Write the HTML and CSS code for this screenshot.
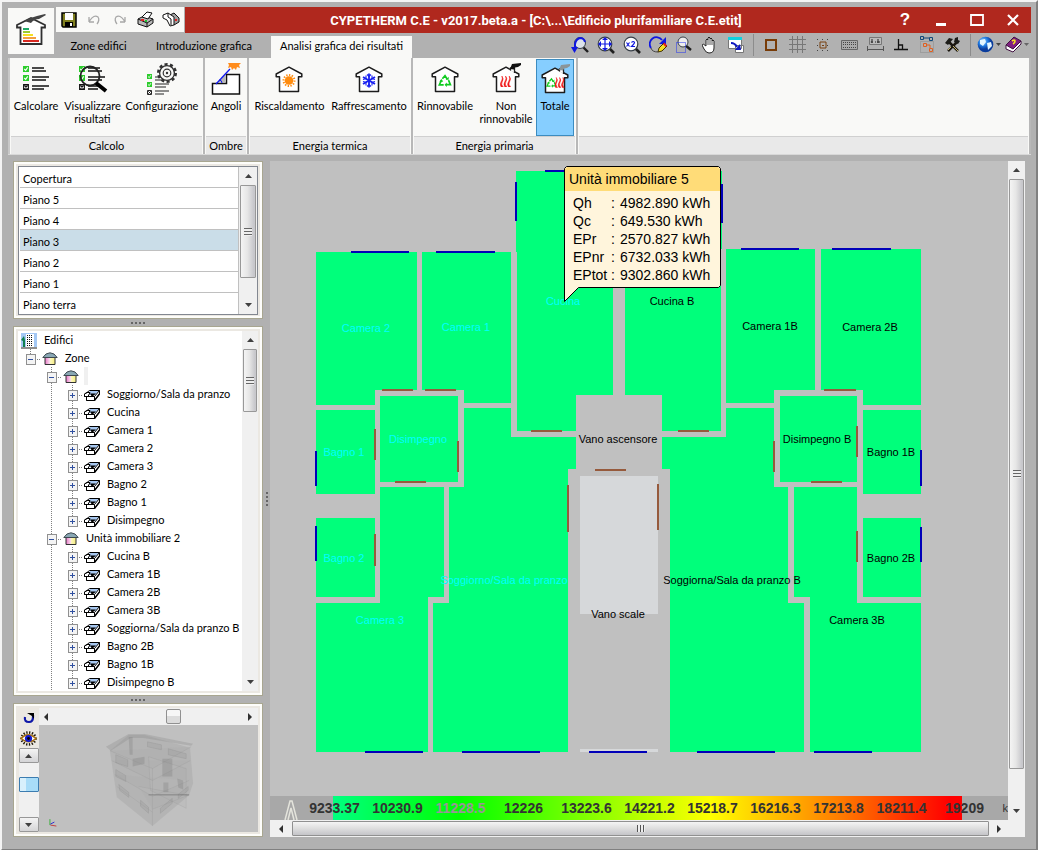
FILE: index.html
```html
<!DOCTYPE html>
<html lang="it">
<head>
<meta charset="utf-8">
<meta name="viewport" content="width=device-width, initial-scale=1">
<title>CYPETHERM C.E</title>
<link rel="stylesheet" href="styles.css">
</head>
<body>
<svg class="sprite" aria-hidden="true">
  <defs>
    <linearGradient id="g-home" x1="0" x2="1"><stop offset="0" stop-color="#e878c8"/><stop offset=".5" stop-color="#fce4f0"/><stop offset=".5" stop-color="#fdf8c0"/><stop offset="1" stop-color="#f4ec80"/></linearGradient>
    <radialGradient id="g-globe" cx=".35" cy=".3"><stop offset="0" stop-color="#9cd8ff"/><stop offset=".6" stop-color="#1e78e0"/><stop offset="1" stop-color="#0a3c9c"/></radialGradient>
    <symbol id="i-room" viewBox="0 0 16 14"><path d="M5.500 2.500H15.500V6L10.500 12.500H2.500V8.500H.500V6L3 4.500z" fill="#fff" stroke="#000"/><path d="M5.500 3H15L11.500 7H5z" fill="#a8c8f0"/><path d="M.500 8.500V6L3 4.500H6L4 8.500zM4 8.500h6.500M2.500 12.500h8v-4l5-6" fill="none" stroke="#000"/><path d="M6 5.500h6L8 9z"/><path d="M10.500 12.500L15.500 6" stroke="#000" stroke-width="1.400"/></symbol>
    <symbol id="i-home" viewBox="0 0 16 14"><path d="M3 5h10v7.500H3z" fill="url(#g-home)" stroke="#303030"/><path d="M.800 5.500L4 2 8 .800 12 2l3.200 3.500z" fill="#8aa8b4" stroke="#3c4850"/></symbol>
    <symbol id="i-house" viewBox="0 0 28 28"><path d="M4.500 26.500V11.800H1.200V9L14 2.200 26.800 9v2.800h-3.300v14.700z" fill="#fff" stroke="#1c1c1c" stroke-width="1.500" stroke-linejoin="round"/></symbol>
    <symbol id="i-recycle" viewBox="0 0 16 14"><g fill="none" stroke="#10cc20" stroke-width="1.900"><path d="M5 4.500L8 1l2.600 4M12 6l2.200 5.200H9M6.500 11.500H1.500L4 6"/></g><path d="M8.800 5.500h3.400V2zM10 8.800v5L7.500 11.300zM1.500 7.500l2.600-2.700 1.800 3z" fill="#10cc20"/></symbol>
    <symbol id="i-flames" viewBox="0 0 12 12"><path d="M1.500 0q2.500 3 .500 6t1 6H.800q-2-3 0-6t.700-6zM5.500 0q2.500 3 .500 6t1 6H4.800q-2-3 0-6t.700-6zM9.500 0q2.500 3 .500 6t1 6H8.800q-2-3 0-6t.700-6z" fill="#f01818" stroke="#f01818" stroke-width=".6"/></symbol>
    <symbol id="i-lens" viewBox="0 0 18 18"><path d="M12 12l5 5" stroke="#202020" stroke-width="2.600"/><circle cx="8" cy="8" r="6.800" fill="#fff" stroke="#384048" stroke-width="1.200"/></symbol>
    <symbol id="i-check" viewBox="0 0 6 6"><path d="M0 0h6v6H0z" fill="#2ccc2c"/><path d="M1.300 3l1.400 1.400 2-3" fill="none" stroke="#fff" stroke-width="1.100"/></symbol>
    <symbol id="i-x" viewBox="0 0 6 6"><path d="M.600.600h4.800v4.800H.600zM1.500 1.500l3 3m0-3l-3 3" fill="#fff" stroke="#111" stroke-width="1.100"/></symbol>
    <symbol id="i-up" viewBox="0 0 7 4"><path d="M0 4L3.500 0 7 4z" fill="#404040"/></symbol>
    <symbol id="i-down" viewBox="0 0 7 4"><path d="M0 0h7L3.500 4z" fill="#404040"/></symbol>
    <symbol id="i-left" viewBox="0 0 4 8"><path d="M4 0v8L0 4z" fill="#303030"/></symbol>
    <symbol id="i-right" viewBox="0 0 4 8"><path d="M0 0v8l4-4z" fill="#303030"/></symbol>
  </defs>
</svg>
<div class="window">
  <header class="header">
    <div class="logo">
      <svg width="36" height="36" viewBox="0 0 36 36" aria-hidden="true"><path d="M7.500 31V14.500H4V12L18 5l14 7v2.500h-3.500V31z" fill="#fff" stroke="#303030" stroke-width="1.800"/><path d="M11 8Q16 5 24 3l8-2 1 1-7 4q-5 0-8 4z" fill="#444"/><path d="M10 15h6v2h-6z" fill="#20a868"/><path d="M10 18h7v2h-7z" fill="#9ccc30"/><path d="M10 21h10v2H10z" fill="#f4e020"/><path d="M10 24h13v2H10z" fill="#f4a040"/><path d="M10 27h16v2H10z" fill="#d82820"/></svg>
    </div>
    <div class="header-rows">
      <div class="title-row">
        <div class="quick">
          <button class="tool" aria-label="Salva"><svg width="16" height="16" viewBox="0 0 16 16"><path d="M1 1h14v14H2L1 14z" fill="#808020" stroke="#000" stroke-width="1.500"/><path d="M4 1h8v7H4z" fill="#fff"/><path d="M4 10h8v5H4z"/><path d="M9 11h2v3H9z" fill="#fff"/></svg></button>
          <button class="tool" aria-label="Annulla"><svg width="16" height="16" viewBox="0 0 16 16"><path d="M3 10V5m0 5h5M3.500 9Q8 2 12 5q2 3-1 7" fill="none" stroke="#a8a8a8" stroke-width="1.300"/></svg></button>
          <button class="tool" aria-label="Ripeti"><svg width="16" height="16" viewBox="0 0 16 16"><path d="M13 10V5m0 5H8M12.500 9Q8 2 4 5q-2 3 1 7" fill="none" stroke="#a8a8a8" stroke-width="1.300"/></svg></button>
          <button class="tool" aria-label="Stampa"><svg width="18" height="17" viewBox="0 0 18 17"><path d="M1 8l6-3 9 3v4l-6 4-9-3z" fill="#b8b8b8" stroke="#111"/><path d="M5 6l5-5 5 1-4 6z" fill="#fff" stroke="#111"/><path d="M1 8l9 4 6-4M10 12v4" fill="none" stroke="#111"/><path d="M4 8h3v2H4z" fill="#e02020"/><path d="M8 9h2v2H8z" fill="#20c030"/></svg></button>
          <button class="tool" aria-label="Anteprima"><svg width="18" height="17" viewBox="0 0 18 17"><path d="M8 4l4-2 5 5v4l-5 3z" fill="#a0a0a0" stroke="#111"/><path d="M1 4l5-2 6 4v8l-4 1-3-6-4-2z" fill="#fff" stroke="#111"/><path d="M6 2v4l3 2v6" fill="none" stroke="#111"/><path d="M13 8h2v2h-2z" fill="#e02020"/></svg></button>
        </div>
        <div class="titlebar">
          <h1 class="title">CYPETHERM C.E - v2017.beta.a - [C:\...\Edificio plurifamiliare C.E.etit]</h1>
          <button class="win-btn help" aria-label="Aiuto">?</button>
          <button class="win-btn" aria-label="Riduci"><svg width="14" height="14"><path d="M2 10h10v3H2z" fill="#fff"/></svg></button>
          <button class="win-btn" aria-label="Ingrandisci"><svg width="14" height="14"><path d="M1 2h12v10H1z" fill="none" stroke="#fff" stroke-width="1.800"/></svg></button>
          <button class="win-btn" aria-label="Chiudi"><svg width="14" height="14"><path d="M2 2l10 10M12 2L2 12" stroke="#fff" stroke-width="2.200"/></svg></button>
        </div>
      </div>
      <div class="tab-row">
        <nav class="tabs">
          <button class="tab tab-zone">Zone edifici</button>
          <button class="tab tab-intro">Introduzione grafica</button>
          <button class="tab tab-active">Analisi grafica dei risultati</button>
        </nav>
        <div class="toolbar">
          <button class="tool" aria-label="Zoom precedente"><svg width="18" height="18" viewBox="0 0 18 18"><path d="M12 11l5 5" stroke="#202020" stroke-width="2.400"/><circle cx="9" cy="7" r="5.500" fill="#dde4ec" stroke="#384048"/><path d="M4 12V8q1-5 5-6 4 0 5 4" fill="none" stroke="#1018e0" stroke-width="2"/><path d="M0 11h7l-3.500 6z" fill="#1018e0"/></svg></button>
          <button class="tool" aria-label="Zoom tutto"><svg width="18" height="18" viewBox="0 0 18 18"><use href="#i-lens" width="18" height="18"/><path d="M8 2v12M2 8h12" stroke="#1018e0" stroke-width="1.200"/><path d="M8 1l3 3H5zM8 15l3-3H5zM1 8l3-3v6zM15 8l-3-3v6z" fill="#1018e0"/></svg></button>
          <button class="tool" aria-label="Zoom x2"><svg width="18" height="18" viewBox="0 0 18 18"><use href="#i-lens" width="18" height="18"/><path d="M3.500 6.500l3 4m0-4l-3 4M8.500 6.500q2-2 3 0 0 1-3 4h3.500" fill="none" stroke="#1018e0" stroke-width="1.200"/></svg></button>
          <button class="tool" aria-label="Ridisegna"><svg width="18" height="18" viewBox="0 0 18 18"><path d="M2 12A6.500 6.500 0 0 1 13 4" fill="none" stroke="#1018e0" stroke-width="1.800"/><path d="M17 1v7h-7z" fill="#1018e0"/><path d="M2 12q1 4 7 4" fill="none" stroke="#444"/><path d="M9 16l1-4 5-5 3 3-5 5z" fill="#f4e020" stroke="#403000"/><path d="M14 8l1.500-1.500 2.500 3L16.500 11z" fill="#e02020"/></svg></button>
          <button class="tool" aria-label="Zoom finestra"><svg width="18" height="18" viewBox="0 0 18 18"><path d="M10 9l6 5" stroke="#202020" stroke-width="2.400"/><circle cx="8" cy="6" r="5" fill="#eee" stroke="#384048"/><path d="M1.500 6.500h9v10h-9z" fill="none" stroke="#2030f0" stroke-dasharray="1 1"/></svg></button>
          <button class="tool" aria-label="Sposta"><svg width="16" height="18" viewBox="0 0 16 18"><path d="M4 10V4q1-2 2 0V2q1-2 2 0v1q1-2 2 0v2q1-2 2 0v7q0 5-5 5-3 0-5-4l-2-4q1-2 4 1z" fill="#fff" stroke="#222"/><path d="M6 4v5m2-6v6m2-4v4" stroke="#555"/></svg></button>
          <button class="tool" aria-label="Finestre"><svg width="18" height="18" viewBox="0 0 18 18"><path d="M1.500 1.500h13v11h-13zM8.500 9.500h8v7h-8z" fill="#fff" stroke="#777"/><path d="M1 1h14v3H1z" fill="#10d0e0"/><path d="M4 7q4 0 6 4" fill="none" stroke="#1018c0" stroke-width="2"/><path d="M14 14H8l5-6z" fill="#1018c0"/></svg></button>
          <span class="tool-sep"></span>
          <button class="tool" aria-label="Riquadro"><svg width="14" height="14"><path d="M2 2h10v10H2z" fill="none" stroke="#783c08" stroke-width="2"/></svg></button>
          <button class="tool" aria-label="Griglia"><svg width="17" height="17"><path d="M3.500 0v17M8.500 0v17M13.500 0v17M0 3.500h17M0 8.500h17M0 13.500h17" stroke="#777"/></svg></button>
          <button class="tool" aria-label="Aggancio"><svg width="16" height="16"><path d="M5 5h6v6H5z" fill="none" stroke="#784010"/><path d="M7 8h2v1H7z" fill="#784010"/><path d="M2 2.500h14M2 13.500h14M2 8.500h1M12 8.500h3" stroke="#444" stroke-dasharray="1 4"/></svg></button>
          <button class="tool" aria-label="Tastiera"><svg width="17" height="12"><path d="M.500 1.500h16v9H.500z" fill="#aaa" stroke="#666"/><path d="M2 3.500h13M2 5.500h13M2 8.500h13" stroke="#444" stroke-dasharray="1 1"/></svg></button>
          <button class="tool" aria-label="Quote"><svg width="17" height="15"><path d="M2.500.500h12v7h-12z" fill="#bbb" stroke="#777"/><path d="M5 2v4M3.800 5h2M8 5h1M11 2v4M10 5h3" stroke="#222"/><path d="M.500 9v5M16.500 9v5M1 12.500h15" stroke="#555"/></svg></button>
          <button class="tool" aria-label="Ortogonale"><svg width="16" height="14"><path d="M5.500 1v11M1 11.500h14M5.500 7h4v4" fill="none" stroke="#111" stroke-width="1.300"/></svg></button>
          <button class="tool" aria-label="Selezione"><svg width="16" height="17"><path d="M1.500 5.500h13v11h-13z" fill="none" stroke="#888" stroke-dasharray="1 1"/><path d="M1.500.500h3v3h-3zM10.500 1.500h3v3h-3zM5 2h5" fill="none" stroke="#104878"/><path d="M4.500 7.500h3v3h-3zM10.500 12.500h3v3h-3zM8 9h3v3" fill="none" stroke="#e06020"/></svg></button>
          <button class="tool" aria-label="Strumenti"><svg width="16" height="16"><path d="M3 4l10 10M12 5L3 14" stroke="#1c1810" stroke-width="2.500"/><path d="M0 6l4-5 4 1-5 6zM10 1l3-1v3l2 1-2 3-4-2z" fill="#1c1c18"/><path d="M8 9l5 5M6 10l-3 3" stroke="#c8b870"/></svg></button>
          <span class="tool-sep"></span>
          <button class="tool tool-drop" aria-label="Web"><svg width="17" height="17"><circle cx="8.500" cy="8.500" r="7.800" fill="url(#g-globe)"/><path d="M3 4l5-1 1 3-3 4-3-2zM10 7l4-1 1 4-4 4z" fill="#e4f6ff"/></svg><svg width="5" height="3"><path d="M0 0h5L2.500 3z" fill="#444"/></svg></button>
          <button class="tool tool-drop" aria-label="Guida"><svg width="17" height="17"><path d="M1 9L9 1l7 4-8 9z" fill="#802080" stroke="#401040"/><path d="M1 9v4l7 3 8-8V5l-8 8z" fill="#fff" stroke="#401040"/><path d="M7 5q3-2 3 0t-2 3" fill="none" stroke="#f8e820" stroke-width="1.600"/></svg><svg width="5" height="3"><path d="M0 0h5L2.500 3z" fill="#666"/></svg></button>
        </div>
      </div>
    </div>
  </header>

  <section class="ribbon">
    <div class="group">
      <div class="group-buttons cols-calc">
        <button class="big"><svg width="28" height="28" viewBox="0 0 28 28"><use href="#i-check" x="1" y="1" width="6" height="6"/><use href="#i-check" x="1" y="10" width="6" height="6"/><use href="#i-x" x="1" y="19" width="6" height="6"/><path d="M10 3h12M10 6h14M10 12h17M10 15h14M10 21h17M10 24h12" stroke="#111" stroke-width="1.300"/></svg><span>Calcolare</span></button>
        <button class="big"><svg width="30" height="28" viewBox="0 0 30 28"><use href="#i-check" x="1" y="1" width="6" height="6"/><use href="#i-check" x="1" y="10" width="6" height="6"/><use href="#i-x" x="1" y="19" width="6" height="6"/><path d="M10 3h12M10 6h14M10 12h17M10 15h14M10 21h10M10 24h10" stroke="#111" stroke-width="1.500"/><circle cx="12" cy="11" r="9.500" fill="none" stroke="#222" stroke-width="1.800"/><path d="M18 18l10 8" stroke="#000" stroke-width="4"/></svg><span>Visualizzare<br>risultati</span></button>
        <button class="big"><svg width="32" height="32" viewBox="0 0 32 32"><use href="#i-check" x="1" y="11" width="5" height="5"/><use href="#i-check" x="1" y="19" width="5" height="5"/><use href="#i-x" x="1" y="27" width="5" height="5"/><path d="M9 14h10M9 17h9M9 21h14M9 24h11M9 28h14M9 31h9" stroke="#222" stroke-width="1.200"/><circle cx="21" cy="10" r="8.500" fill="none" stroke="#333" stroke-width="3" stroke-dasharray="3 2.340"/><circle cx="21" cy="10" r="7.400" fill="#f9f9f7" stroke="#333" stroke-width="1.300"/><circle cx="21" cy="10" r="3.800" fill="none" stroke="#333" stroke-width="1.200"/><circle cx="21" cy="10" r="1.200" fill="#333"/></svg><span>Configurazione</span></button>
      </div>
      <div class="caption">Calcolo</div>
    </div>
    <div class="group">
      <div class="group-buttons cols-one">
        <button class="big"><svg width="30" height="32" viewBox="0 0 30 32"><path d="M1.500 20.500h14v-9h13V31h-27z" fill="#fff" stroke="#111" stroke-width="1.500"/><path d="M6 20l8-8v8z" fill="#b8b8b8"/><path d="M5 21L19 6" stroke="#1018f0" stroke-width="1.300"/><path d="M8 17q3 0 3 3" fill="none" stroke="#1018f0"/><path d="M17 0h13l-2 2 1 3-3-1-1 3-2-2-2 2-1-3-3 1 1-3z" fill="#ff8c1c"/></svg><span>Angoli</span></button>
      </div>
      <div class="caption">Ombre</div>
    </div>
    <div class="group">
      <div class="group-buttons cols-heat">
        <button class="big"><svg width="28" height="28" viewBox="0 0 28 28"><use href="#i-house" width="28" height="28"/><circle cx="14" cy="15.500" r="5.500" fill="none" stroke="#ff8c10" stroke-width="2" stroke-dasharray="1.400 1.400"/><circle cx="14" cy="15.500" r="4.300" fill="#ff8c10"/></svg><span>Riscaldamento</span></button>
        <button class="big"><svg width="28" height="28" viewBox="0 0 28 28"><use href="#i-house" width="28" height="28"/><path d="M14 8.500v14M8 12l12 7M20 12L8 19" stroke="#1820f0" stroke-width="1.800"/><path d="M12 9.500l2 2 2-2M12 21.500l2-2 2 2M8 14.500l3-1v-3M20 14.500l-3-1v-3M8 16.500l3 1v3M20 16.500l-3 1v3" fill="none" stroke="#1820f0" stroke-width="1.100"/></svg><span>Raffrescamento</span></button>
      </div>
      <div class="caption">Energia termica</div>
    </div>
    <div class="group">
      <div class="group-buttons cols-prim">
        <button class="big"><svg width="28" height="28" viewBox="0 0 28 28"><use href="#i-house" width="28" height="28"/><use href="#i-recycle" x="7" y="9" width="14" height="14"/></svg><span>Rinnovabile</span></button>
        <button class="big"><svg width="32" height="32" viewBox="0 0 32 32"><use href="#i-house" x="2" y="2" width="28" height="28"/><path d="M20.500 7.500V5h4v5" fill="#fff" stroke="#222" stroke-width="1.300"/><path d="M20 6l2-5 9-1v2l-3 2-3 .500-1 2z" fill="#111"/><use href="#i-flames" x="10" y="13" width="12" height="11"/></svg><span>Non<br>rinnovabile</span></button>
        <button class="big big-on" aria-pressed="true"><svg width="32" height="32" viewBox="0 0 32 32"><use href="#i-house" x="2" y="2" width="28" height="28"/><path d="M20.500 7.500V5h4v5" fill="#fff" stroke="#222" stroke-width="1.300"/><path d="M20 6l2-5 9-1v2l-3 2-3 .500-1 2z" fill="#8a9498"/><use href="#i-recycle" x="7" y="12" width="11" height="14"/><use href="#i-flames" x="16" y="13" width="10" height="11"/></svg><span>Totale</span></button>
      </div>
      <div class="caption">Energia primaria</div>
    </div>
    <div class="group group-last"><div class="group-buttons"></div><div class="caption"></div></div>
  </section>

  <main class="main">
    <aside class="side">
      <section class="panel panel-floors">
        <div class="floors">
          <ul class="floor-list">
            <li>Copertura</li><li>Piano 5</li><li>Piano 4</li><li class="selected">Piano 3</li><li>Piano 2</li><li>Piano 1</li><li>Piano terra</li>
          </ul>
          <div class="vbar vbar-floors"><button class="arrow" aria-label="Su"><svg width="7" height="4"><use href="#i-up"/></svg></button><div class="thumb"><i class="grip"></i></div><button class="arrow" aria-label="Giù"><svg width="7" height="4"><use href="#i-down"/></svg></button></div>
        </div>
      </section>
      <div class="dots"></div>
      <section class="panel panel-tree">
        <ul class="tree">
          <li><svg class="node" width="16" height="16"><path d="M0 0h16v14H0z" fill="#a4c8f4"/><path d="M0 14h16v2H0z" fill="#909090"/><path d="M5 1h8v13H5z" fill="#fff"/><path d="M6.500 2v11M8.500 2v11M10.500 2v11" stroke="#111" stroke-dasharray="1 1"/><path d="M2 14V8l-2-1 3-4 1 4v7z" fill="#108050"/></svg><span>Edifici</span></li>
          <li><i class="g e minus up"></i><svg class="node" width="16" height="14"><use href="#i-home"/></svg><span>Zone</span></li>
          <li><i class="g"></i><i class="g e minus line"></i><svg class="node" width="16" height="14"><use href="#i-home"/></svg><span class="blank"></span></li>
          <li><i class="g"></i><i class="g line"></i><i class="g e plus line"></i><svg class="node" width="16" height="14"><use href="#i-room"/></svg><span>Soggiorno/Sala da pranzo</span></li>
          <li><i class="g"></i><i class="g line"></i><i class="g e plus line"></i><svg class="node" width="16" height="14"><use href="#i-room"/></svg><span>Cucina</span></li>
          <li><i class="g"></i><i class="g line"></i><i class="g e plus line"></i><svg class="node" width="16" height="14"><use href="#i-room"/></svg><span>Camera 1</span></li>
          <li><i class="g"></i><i class="g line"></i><i class="g e plus line"></i><svg class="node" width="16" height="14"><use href="#i-room"/></svg><span>Camera 2</span></li>
          <li><i class="g"></i><i class="g line"></i><i class="g e plus line"></i><svg class="node" width="16" height="14"><use href="#i-room"/></svg><span>Camera 3</span></li>
          <li><i class="g"></i><i class="g line"></i><i class="g e plus line"></i><svg class="node" width="16" height="14"><use href="#i-room"/></svg><span>Bagno 2</span></li>
          <li><i class="g"></i><i class="g line"></i><i class="g e plus line"></i><svg class="node" width="16" height="14"><use href="#i-room"/></svg><span>Bagno 1</span></li>
          <li><i class="g"></i><i class="g line"></i><i class="g e plus up"></i><svg class="node" width="16" height="14"><use href="#i-room"/></svg><span>Disimpegno</span></li>
          <li><i class="g"></i><i class="g e minus line"></i><svg class="node" width="16" height="14"><use href="#i-home"/></svg><span>Unità immobiliare 2</span></li>
          <li><i class="g"></i><i class="g line"></i><i class="g e plus line"></i><svg class="node" width="16" height="14"><use href="#i-room"/></svg><span>Cucina B</span></li>
          <li><i class="g"></i><i class="g line"></i><i class="g e plus line"></i><svg class="node" width="16" height="14"><use href="#i-room"/></svg><span>Camera 1B</span></li>
          <li><i class="g"></i><i class="g line"></i><i class="g e plus line"></i><svg class="node" width="16" height="14"><use href="#i-room"/></svg><span>Camera 2B</span></li>
          <li><i class="g"></i><i class="g line"></i><i class="g e plus line"></i><svg class="node" width="16" height="14"><use href="#i-room"/></svg><span>Camera 3B</span></li>
          <li><i class="g"></i><i class="g line"></i><i class="g e plus line"></i><svg class="node" width="16" height="14"><use href="#i-room"/></svg><span>Soggiorna/Sala da pranzo B</span></li>
          <li><i class="g"></i><i class="g line"></i><i class="g e plus line"></i><svg class="node" width="16" height="14"><use href="#i-room"/></svg><span>Bagno 2B</span></li>
          <li><i class="g"></i><i class="g line"></i><i class="g e plus line"></i><svg class="node" width="16" height="14"><use href="#i-room"/></svg><span>Bagno 1B</span></li>
          <li><i class="g"></i><i class="g line"></i><i class="g e plus up"></i><svg class="node" width="16" height="14"><use href="#i-room"/></svg><span>Disimpegno B</span></li>
        </ul>
        <div class="vbar vbar-tree"><button class="arrow" aria-label="Su"><svg width="7" height="4"><use href="#i-up"/></svg></button><div class="thumb"><i class="grip"></i></div><button class="arrow" aria-label="Giù"><svg width="7" height="4"><use href="#i-down"/></svg></button></div>
      </section>
      <div class="dots"></div>
      <section class="panel panel-view">
        <div class="view-tools">
          <button class="mini" aria-label="Ruota"><svg width="12" height="12"><path d="M2 5q-1 5 4 5 4 0 4-5V3" fill="none" stroke="#1018a8" stroke-width="2.200"/><path d="M4 1h7v6L9 4z"/></svg></button>
          <button class="mini" aria-label="Vista"><svg width="17" height="15" viewBox="0 0 17 15"><ellipse cx="8.500" cy="7.500" rx="7" ry="6" fill="none" stroke="#201808" stroke-width="2.500" stroke-dasharray="1.300 1.500"/><path d="M1 7.500Q8 0 16 7.500 9 14 1 7.500z" fill="#fff" stroke="#a87010" stroke-width="1.500"/><circle cx="8.500" cy="7.500" r="3.600" fill="#1018d0"/><circle cx="8.500" cy="7.500" r="1.400"/></svg></button>
          <div class="vslider"><button class="knob" aria-label="Su"><svg width="7" height="4"><use href="#i-up"/></svg></button><div class="knob knob-on"></div><button class="knob" aria-label="Giù"><svg width="7" height="4"><use href="#i-down"/></svg></button></div>
        </div>
        <div class="view-body">
          <div class="hslider"><svg width="4" height="8"><use href="#i-left"/></svg><div class="hknob"></div><svg width="4" height="8"><use href="#i-right"/></svg></div>
          <svg class="model" viewBox="0 0 220 108" role="img" aria-label="Vista 3D">
            <path d="M71 26L78 73l36 29 37-31 4-12-3-36-46-13H90z" fill="#888" fill-opacity=".2"/>
            <path d="M67 22L90 9h16l49 10-2 2-48-8H92L72 26z" fill="#888" fill-opacity=".3"/>
            <path d="M71 26l43 18 39-22M114 44v58M76 50l38 22 37-16M100 62l50 9-36 14M73 36l41 20 38-20M78 62l36 26M110 32l38 12v40l-36-18z" fill="#808080" fill-opacity=".05" stroke="#909090" stroke-opacity=".2"/>
            <path d="M90 12h4v18h-3zM124 34h10v18h-10zM125 58h5v10h-5zM139 54l6 2v9l-5-2zM94 34l12-2v7l-12 3z" fill="#707070" fill-opacity=".25"/>
            <path d="M77 30l12 5v7l-12-4zM77 45l10 6v6l-10-5zM80 60l10 8v5l-9-7zM109 17l14 3v5l-14-3zM130 24l18 5v5l-18-4zM134 74l-12 10v5l12-10zM150 62l-10 8v4l10-8zM102 76l8 7v6l-8-7z" fill="#707070" fill-opacity=".1" stroke="#888" stroke-opacity=".25"/>
            <path d="M110 70.500h41" stroke="#707070" stroke-opacity=".7"/>
            <path d="M10.500 95v6" stroke="#40b040"/><path d="M11 101l6 1" stroke="#c04040"/><path d="M11 100l4-2" stroke="#3030d0"/>
          </svg>
        </div>
      </section>
    </aside>

    <div class="splitter"></div>

    <section class="canvas">
      <svg class="plan" viewBox="270 161 738 635" role="img" aria-label="Pianta Piano 3">
        <g class="room">
          <path d="M316 252H417V390H375V405H316z"/><path d="M422 252H511V403H464V390H422z"/>
          <path d="M516 171H613V395H576V431H517V252H516z"/><path d="M625 171H722V249H721V431H662V395H625z"/>
          <path d="M726 249H815V390H774V403H726z"/><path d="M821 249H921V405H863V390H821z"/>
          <path d="M316 410H375V494H316zM380 396H458V482H380zM316 518H375V597H316z"/>
          <path d="M464 408H511V437H576V469H568V752H433V603H449V487H464z"/>
          <path d="M380 487H444V597H428V752H316V603H380z"/>
          <path d="M780 396H857V482H780zM863 410H921V494H863zM863 518H921V597H863z"/>
          <path d="M726 408H774V487H788V603H804V752H670V469H662V437H726z"/>
          <path d="M794 487H857V603H921V752H810V597H794z"/>
        </g>
        <path class="stair" d="M580 476H658V614H580zM580 749H658V752H580z"/>
        <path class="pane" d="M351 252h58M436 252h59M545 171h40M516 182v39M722 184v39M741 249h58M832 249h59M316 451v35M316 526v35M921 450v36M921 527v35M365 752h58M462 752h78M589 752h58M697 752h78M814 752h58"/>
        <path class="door" d="M382 390h31M425 390h31M824 390h32M531 431h31M678 431h31M595 470h31M395 482h31M811 482h31M375 429v31M458 441v31M774 441v31M857 426v31M375 534v32M857 531v31M568 485v47M658 484v46"/>
        <g class="label own">
          <text x="366" y="332">Camera 2</text><text x="466" y="331">Camera 1</text><text x="563" y="305">Cucina</text><text x="418" y="443">Disimpegno</text><text x="344" y="456">Bagno 1</text><text x="344" y="562">Bagno 2</text><text x="504" y="584">Soggiorno/Sala da pranzo</text><text x="380" y="624">Camera 3</text>
        </g>
        <g class="label">
          <text x="672" y="305">Cucina B</text><text x="770" y="330">Camera 1B</text><text x="870" y="331">Camera 2B</text><text x="618" y="443">Vano ascensore</text><text x="817" y="443">Disimpegno B</text><text x="891" y="456">Bagno 1B</text><text x="891" y="562">Bagno 2B</text><text x="732" y="584">Soggiorna/Sala da pranzo B</text><text x="618" y="618">Vano scale</text><text x="857" y="624">Camera 3B</text>
        </g>
        <g class="tip">
          <path d="M566.500 166.500H718.500L720.500 168.500V285.500L718.500 287.500H578.500L564.500 301.500V168.500z" fill="#fff5dc" stroke="#000"/>
          <path d="M567 167H718L720 169V191H565V169z" fill="#ffdc78"/>
          <text x="569" y="184">Unità immobiliare 5</text>
          <text x="573" y="208">Qh</text><text x="611" y="208">:</text><text x="620" y="208">4982.890 kWh</text>
          <text x="573" y="226">Qc</text><text x="611" y="226">:</text><text x="620" y="226">649.530 kWh</text>
          <text x="573" y="244">EPr</text><text x="611" y="244">:</text><text x="620" y="244">2570.827 kWh</text>
          <text x="573" y="262">EPnr</text><text x="611" y="262">:</text><text x="620" y="262">6732.033 kWh</text>
          <text x="573" y="280">EPtot</text><text x="611" y="280">:</text><text x="620" y="280">9302.860 kWh</text>
        </g>
      </svg>
      <div class="legend">
        <svg class="north" width="14" height="20" viewBox="0 0 14 20"><path d="M1 20L6 1h2l5 19M4 20L7 8l3 12" fill="none" stroke="#e4e4dc" stroke-width="1.500"/></svg>
        <div class="ramp"></div>
        <div class="ticks"><span>9233.37</span><span>10230.9</span><span class="faint">11228.5</span><span>12226</span><span>13223.6</span><span>14221.2</span><span>15218.7</span><span>16216.3</span><span>17213.8</span><span>18211.4</span><span>19209</span></div>
        <span class="unit">k</span>
      </div>
      <div class="vbar vbar-canvas"><button class="arrow" aria-label="Su"><svg width="7" height="4"><use href="#i-up"/></svg></button><div class="thumb"><i class="grip"></i></div><button class="arrow" aria-label="Giù"><svg width="7" height="4"><use href="#i-down"/></svg></button></div>
      <div class="hbar"><button class="arrow" aria-label="Sinistra"><svg width="4" height="8"><use href="#i-left"/></svg></button><div class="hthumb"><i class="hgrip"></i></div><button class="arrow" aria-label="Destra"><svg width="4" height="8"><use href="#i-right"/></svg></button></div>
    </section>
  </main>
</div>
</body>
</html>
```
FILE: styles.css
```css
* { box-sizing: border-box; }
body {
  margin: 0;
  background: #b1b1b1;
  color: #000;
  font: 11px/14px Lato, "Liberation Sans", sans-serif;
}
button {
  margin: 0;
  padding: 0;
  border: 0;
  background: none;
  font: inherit;
  color: inherit;
}
ul { margin: 0; padding: 0; list-style: none; }
svg { display: block; flex: none; }
.sprite { position: absolute; width: 0; height: 0; }

.window {
  display: flex;
  flex-direction: column;
  min-height: 100vh;
  padding: 5px 5px 12px 6px;
  border: 2px solid;
  border-color: #f4f4f4 #808080 #808080 #f4f4f4;
}

.header { display: grid; grid-template-columns: 46px 1fr; gap: 2px; height: 51px; }
.logo {
  display: flex;
  align-items: center;
  justify-content: center;
  height: 46px;
  margin-top: 1px;
  background: #f9f9f7;
}
.header-rows { display: grid; grid-template-rows: 26px 25px; }
.title-row { display: flex; }
.quick {
  display: flex;
  flex: none;
  width: 128px;
  height: 25px;
  margin-right: 1px;
  background: #f9f9f7;
}
.quick .tool { flex: 1; }
.tool { display: flex; align-items: center; justify-content: center; width: 26px; }
.titlebar { display: flex; flex: 1; background: #b0281e; color: #fff; }
.title {
  flex: 1;
  margin: 0;
  font: bold 13px/27px Roboto, "Liberation Sans", sans-serif;
  text-align: center;
  white-space: nowrap;
}
.win-btn { display: flex; align-items: center; justify-content: center; width: 36px; }
.help { font: bold 17px/26px "Liberation Sans", sans-serif; }

.tab-row { display: flex; justify-content: space-between; }
.tabs { display: flex; padding-top: 3px; }
.tab { padding-bottom: 2px; white-space: nowrap; }
.tab-zone { width: 85px; }
.tab-intro { width: 126px; }
.tab-active { width: 141px; margin-left: 4px; background: #f9f9f7; }
.toolbar { display: flex; padding-bottom: 2px; }
.tool-sep { width: 5px; margin: 1px 0 0 4px; border-left: 1px solid #8c8c8c; }
.tool-drop { gap: 2px; width: 28px; }

.ribbon {
  display: grid;
  grid-template-columns: 197px 44px 164px 165px 1fr;
  height: 97px;
  border-bottom: 1px solid #d8d8d8;
  background: #f9f9f7;
}
.group {
  display: grid;
  grid-template-rows: 79px 17px;
  border-right: 2px solid #b8b8b8;
  padding: 0 1px;
}
.group:first-child { border-left: 2px solid #c8c8c8; }
.group-buttons { display: grid; padding-top: 1px; border-bottom: 1px solid #d0d0d0; }
.cols-calc { grid-template-columns: 50px 63px 76px; }
.cols-one { grid-template-columns: 1fr; }
.cols-heat { grid-template-columns: 79px 80px; }
.cols-prim { grid-template-columns: 62px 60px 38px; }
.big {
  display: grid;
  grid-template-rows: 40px auto;
  align-content: start;
  justify-items: center;
  justify-content: center;
  height: 77px;
  line-height: 13px;
  text-align: center;
  white-space: nowrap;
}
.big svg { align-self: center; }
.big-on {
  grid-template-rows: 39px auto;
  border: 1px solid #3c8cc0;
  background: #86ceff;
}
.caption { background: #e9e9e9; line-height: 18px; text-align: center; }

.main {
  display: grid;
  flex: 1;
  grid-template-columns: 250px 7px minmax(0, 1fr);
  padding: 6px 6px 0 5px;
}
.side { display: grid; grid-template-rows: 158px 7px 1fr 7px 134px; }
.panel {
  display: grid;
  padding: 4px;
  border: 1px solid #a8a690;
  background: #ebe8e2;
  box-shadow: inset 0 0 0 2px #fdfdfa;
}
.floors {
  display: grid;
  grid-template-columns: 1fr 18px;
  border: 1px solid #828790;
  background: #fff;
}
.floor-list { padding-left: 1px; border-right: 1px solid #c0c0c0; }
.floor-list li { height: 21px; padding-left: 3px; border-bottom: 1px solid #c0c0c0; line-height: 23px; }
.floor-list li:last-child { border-bottom: 0; }
.floor-list .selected { background: #cadde8; }
.dots {
  justify-self: center;
  align-self: center;
  width: 15px;
  height: 2px;
  background: repeating-linear-gradient(90deg, #666 0 2px, transparent 2px 4px);
}
.splitter {
  align-self: center;
  justify-self: center;
  width: 2px;
  height: 14px;
  background: repeating-linear-gradient(#666 0 2px, transparent 2px 4px);
}

.vbar { display: flex; flex-direction: column; padding: 0 1px; background: #f0f0f0; }
.arrow { display: flex; flex: none; align-items: center; justify-content: center; height: 18px; }
.vbar .arrow:last-child { margin-top: auto; }
.thumb {
  display: flex;
  align-items: center;
  justify-content: center;
  border: 1px solid #989898;
  border-radius: 1px;
  background: linear-gradient(90deg, #f4f4f4, #e6e6e6 45%, #c8c8cc 90%);
}
.grip { width: 8px; height: 8px; background: repeating-linear-gradient(#666 0 1px, #eee 1px 3px); }
.vbar-floors .thumb { height: 93px; }
.vbar-tree .thumb { height: 63px; }
.vbar-canvas { grid-row: 1 / 3; grid-column: 2; }
.vbar-canvas .thumb { flex: 1; margin-bottom: 33px; }

.panel-tree { grid-template-columns: 1fr 16px; }
.tree { padding-left: 2px; background: #fff; overflow: hidden; }
.tree li { display: flex; align-items: center; height: 18px; white-space: nowrap; }
.node { margin: 2px 7px 0 1px; }
.blank { width: 4px; height: 18px; margin-left: -2px; background: #f0f0f0; }
.g {
  display: flex;
  align-items: center;
  flex: none;
  width: 21px;
  height: 18px;
  background-repeat: no-repeat;
}
.line {
  background-image: repeating-linear-gradient(#808080 0 1px, transparent 1px 2px);
  background-size: 1px 18px;
  background-position: 10px 0;
}
.up {
  background-image: repeating-linear-gradient(#808080 0 1px, transparent 1px 2px);
  background-size: 1px 9px;
  background-position: 10px 0;
}
.e::before {
  content: "";
  width: 9px;
  height: 9px;
  margin: 2px 1px 0 6px;
  border: 1px solid #909090;
  background:
    linear-gradient(#3050a0, #3050a0) center / 5px 1px no-repeat,
    #f4f4f4;
}
.plus::before {
  background:
    linear-gradient(#3050a0, #3050a0) center / 5px 1px no-repeat,
    linear-gradient(#3050a0, #3050a0) center / 1px 5px no-repeat,
    #f4f4f4;
}
.e::after {
  content: "";
  width: 5px;
  height: 1px;
  margin-top: 2px;
  background: repeating-linear-gradient(90deg, #808080 0 1px, transparent 1px 2px);
}

.panel-view { grid-template-columns: 21px 1fr; }
.view-tools { display: flex; flex-direction: column; align-items: center; }
.mini { display: flex; align-items: center; justify-content: center; width: 20px; height: 20px; }
.vslider {
  display: flex;
  flex: 1;
  flex-direction: column;
  width: 20px;
  background: #f0f0f0;
}
.knob {
  display: flex;
  align-items: center;
  justify-content: center;
  height: 15px;
  border: 1px solid #989898;
  border-radius: 1px;
  background: linear-gradient(#f4f4f4, #d4d4d6);
}
.knob-on {
  margin: 14px 0 auto;
  border-color: #3c7cb0;
  background: linear-gradient(90deg, #d8f0fc 35%, #a8dcf8 35%);
}
.view-body { display: grid; grid-template-rows: 17px 1fr; min-height: 0; }
.hslider {
  display: flex;
  align-items: center;
  justify-content: space-between;
  padding: 0 6px 0 5px;
  background: #f0f0f0;
}
.hknob {
  width: 15px;
  height: 15px;
  margin-left: 50px;
  border: 1px solid #909090;
  border-radius: 2px;
  background: linear-gradient(#f6f6f6 50%, #dcdcdc 50%);
}
.model { width: 100%; height: 100%; background: #c0c0c0; }

.canvas {
  display: grid;
  grid-template-rows: minmax(0, 1fr) 24px 17px;
  grid-template-columns: minmax(0, 1fr) 17px;
  background: #c0c0c0;
}
.plan { width: 100%; height: 100%; font-family: "Liberation Sans", Arial, sans-serif; }
.room { fill: #00ff7b; shape-rendering: crispEdges; }
.stair { fill: #d6d8da; }
.pane { stroke: #0000b8; stroke-width: 2px; }
.door { stroke: #965a3c; stroke-width: 2px; }
.label { font-size: 11px; text-anchor: middle; }
.own { fill: #00ffff; }
.tip { font-size: 14px; }
.legend {
  display: grid;
  grid-template-columns: 63px 1fr 46px;
  grid-template-rows: 24px;
  align-items: center;
  overflow: hidden;
  background: #a8a8a8;
}
.north { grid-area: 1 / 1; margin: 4px 0 0 14px; }
.ramp {
  grid-area: 1 / 2;
  height: 24px;
  background: linear-gradient(90deg, #00ff80, #00ff00 20%, #ffff00 60%, #ff8000 80%, #ff0000 98%);
}
.ticks {
  display: grid;
  grid-area: 1 / 1 / 2 / 4;
  grid-template-columns: repeat(11, 1fr);
  margin: 0 12px 0 33px;
  color: #333;
  font: bold 14px/24px "Liberation Sans", Arial, sans-serif;
  text-align: center;
}
.faint { color: #969696; }
.unit { grid-area: 1 / 3; justify-self: end; color: #333; font-family: "Liberation Sans", Arial, sans-serif; font-size: 11px; }
.hbar {
  display: grid;
  grid-row: 3;
  grid-column: 1 / 3;
  grid-template-columns: 22px 1fr 19px;
  padding-right: 17px;
  background: #f0f0f0;
}
.hthumb {
  display: flex;
  align-items: center;
  justify-content: center;
  height: 15px;
  margin-top: 1px;
  border: 1px solid #909090;
  border-radius: 1px;
  background: linear-gradient(#f4f4f4, #e0e0e0 45%, #c4c4c8);
}
.hgrip { width: 8px; height: 7px; background: repeating-linear-gradient(90deg, #555 0 1px, #eee 1px 3px); }
```
